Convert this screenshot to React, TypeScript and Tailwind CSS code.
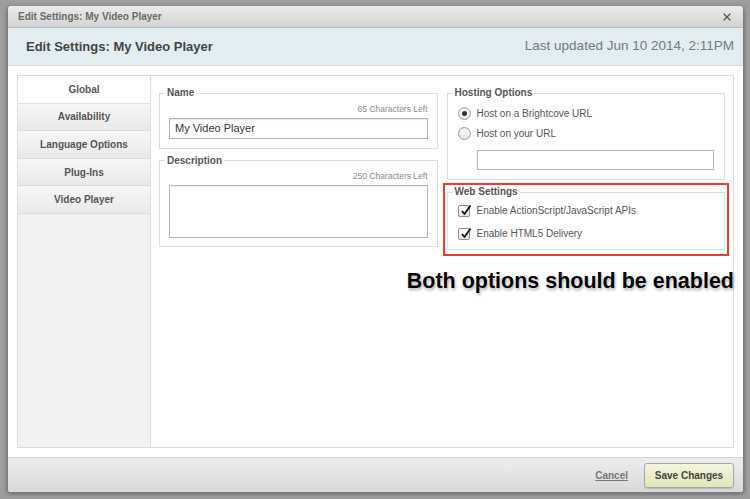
import { X } from 'lucide-react';

const tabs = ['Global', 'Availability', 'Language Options', 'Plug-Ins', 'Video Player'];

function Legend({ children }: { children: React.ReactNode }) {
  return (
    <legend className="-ml-[4px] px-[2px] text-[10px] font-bold leading-[14px] text-[#555]">
      {children}
    </legend>
  );
}

function Radio({ checked }: { checked?: boolean }) {
  return (
    <span className="flex h-[13px] w-[13px] items-center justify-center rounded-full border border-[#9a9a9a] bg-gradient-to-b from-white to-[#e6e6e6] shadow-[inset_0_1px_1px_rgba(0,0,0,0.1)]">
      {checked && <span className="h-[5px] w-[5px] rounded-full bg-[#333]" />}
    </span>
  );
}

function Checkbox() {
  return (
    <span className="relative flex h-[12px] w-[12px] items-center justify-center rounded-[2px] border border-[#8c8c8c] bg-gradient-to-b from-white to-[#e4e4e4]">
      <svg width="12" height="12" viewBox="0 0 12 12" className="absolute -top-[2px] left-[1px]">
        <path d="M2 7 L4.5 10 L10.5 1.5" fill="none" stroke="#111" strokeWidth="1.8" strokeLinejoin="round" />
      </svg>
    </span>
  );
}

export default function App() {
  return (
    <div className="h-[499px] w-[750px] bg-[#9d9d9d] pl-[7px] pr-[6px] pt-[6px] font-['Liberation_Sans',Arial,sans-serif]">
      <div className="flex h-[487px] flex-col overflow-hidden rounded-[4px] border-x border-b border-[#7d7d7d] bg-white shadow-[0_1px_4px_rgba(0,0,0,0.35)]">
        {/* Title bar */}
        <div className="flex h-[22px] shrink-0 items-center justify-between border-b border-[#b9b9b9] bg-gradient-to-b from-[#ebebeb] to-[#d3d3d3] pl-[10px] pr-[10px]">
          <span className="text-[10px] font-bold text-[#6a6a6a]">Edit Settings: My Video Player</span>
          <X size={12} strokeWidth={2.5} className="text-[#555]" />
        </div>

        {/* Header */}
        <div className="flex h-[38px] shrink-0 items-center justify-between border-b border-[#d3dde0] bg-[#e1edf1] pl-[18px] pr-[9px]">
          <span className="text-[13px] font-bold text-[#444]">Edit Settings: My Video Player</span>
          <span className="text-[13.5px] text-[#787878]">Last updated Jun 10 2014, 2:11PM</span>
        </div>

        {/* Body */}
        <div className="flex-1 p-[9px] pb-[9px]">
          <div className="flex h-full border border-[#dcdcdc]">
            <div className="w-[133px] shrink-0 border-r border-[#dcdcdc] bg-[#f2f2f2]">
              {tabs.map((t, i) => (
                <div
                  key={t}
                  className={
                    i === 0
                      ? 'flex h-[27.6px] items-center justify-center border-b border-[#e4e4e4] bg-white text-[10px] font-bold text-[#555]'
                      : 'flex h-[27.6px] items-center justify-center border-b border-[#dcdcdc] bg-gradient-to-b from-[#f7f7f7] to-[#e9e9e9] text-[10px] font-bold text-[#555]'
                  }
                >
                  {t}
                </div>
              ))}
            </div>

            <div className="grid flex-1 grid-cols-2 gap-[9px] px-[8px] pt-[10px]">
              {/* Left column */}
              <div className="flex flex-col gap-[5px]">
                <fieldset className="border border-[#dedede] px-[9px] pb-[9px]">
                  <Legend>Name</Legend>
                  <div className="mt-[3px] text-right text-[8.5px] text-[#8a8a8a]">65 Characters Left</div>
                  <div className="mt-[2px] flex h-[21px] items-center border border-[#b3b3b3] px-[5px] text-[11px] text-[#333] shadow-[inset_0_1px_1px_rgba(0,0,0,0.08)]">
                    My Video Player
                  </div>
                </fieldset>
                <fieldset className="border border-[#dedede] px-[9px] pb-[8px]">
                  <Legend>Description</Legend>
                  <div className="mt-[2px] text-right text-[8.5px] text-[#8a8a8a]">250 Characters Left</div>
                  <div className="mt-[2px] h-[53px] border border-[#b3b3b3] shadow-[inset_0_1px_1px_rgba(0,0,0,0.08)]" />
                </fieldset>
              </div>

              {/* Right column */}
              <div className="flex flex-col">
                <fieldset className="border border-[#dedede] px-[9px] pb-[9px]">
                  <Legend>Hosting Options</Legend>
                  <label className="mt-[6px] flex items-center gap-[6px] pl-[1px] text-[10px] text-[#555]">
                    <Radio checked />
                    Host on a Brightcove URL
                  </label>
                  <label className="mt-[5px] flex items-center gap-[6px] pl-[1px] text-[10px] text-[#555]">
                    <Radio />
                    Host on your URL
                  </label>
                  <div className="ml-[20px] mt-[9px] mr-[1px] h-[20px] border border-[#b3b3b3]" />
                </fieldset>

                <div className="-mx-[4px] mt-[3px] border-2 border-[#f53b22] px-[2px] pb-[4px]">
                  <fieldset className="border border-[#dedede] px-[9px] pb-[8px]">
                    <Legend>Web Settings</Legend>
                    <label className="mt-[4px] flex items-center gap-[7px] pl-[1px] text-[10px] text-[#555]">
                      <Checkbox />
                      Enable ActionScript/JavaScript APIs
                    </label>
                    <label className="mt-[8px] flex items-center gap-[7px] pl-[1px] text-[10px] text-[#555]">
                      <Checkbox />
                      Enable HTML5 Delivery
                    </label>
                  </fieldset>
                </div>

                <div className="-mr-[9px] mt-[12px] flex justify-end">
                  <span className="whitespace-nowrap text-[21.5px] font-bold leading-[26px] text-black [text-shadow:0_0_2px_#fff,1px_2px_3px_rgba(0,0,0,0.35)]">
                    Both options should be enabled
                  </span>
                </div>
              </div>
            </div>
          </div>
        </div>

        {/* Footer */}
        <div className="flex h-[35px] shrink-0 items-center justify-end gap-[16px] border-t border-[#d3d3d3] bg-gradient-to-b from-[#ededed] to-[#d9d9d9] pr-[9px]">
          <span className="text-[10px] font-bold text-[#777] underline">Cancel</span>
          <button className="h-[25px] w-[90px] rounded-[3px] border border-[#a9a9a0] bg-gradient-to-b from-[#f4f6de] to-[#e1e5b9] text-[10px] font-bold text-[#444] shadow-[0_1px_1px_rgba(0,0,0,0.15)]">
            Save Changes
          </button>
        </div>
      </div>
    </div>
  );
}
